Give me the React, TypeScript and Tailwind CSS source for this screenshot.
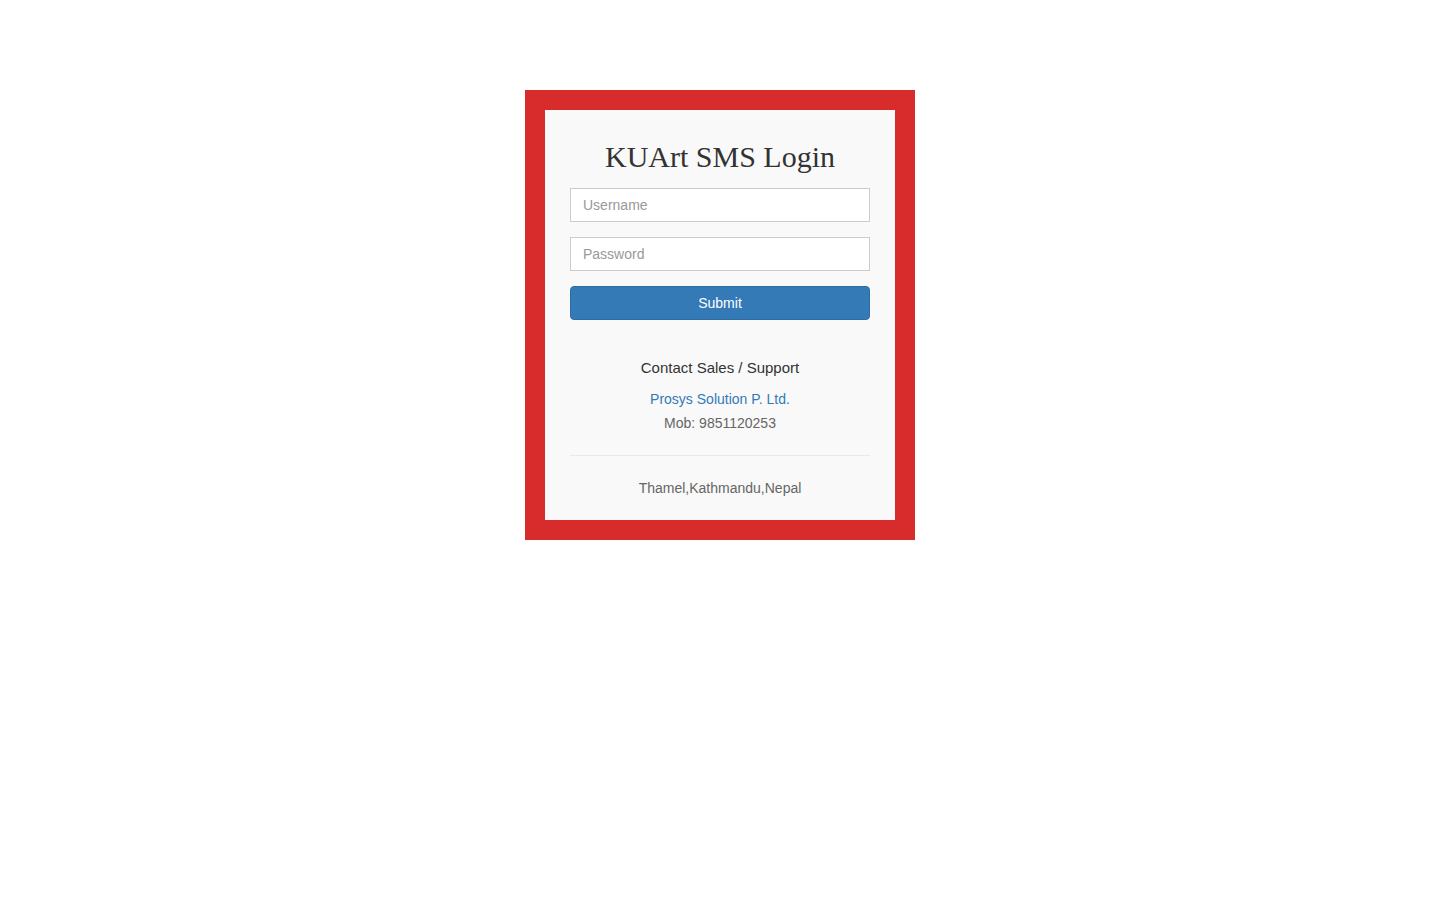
import React from 'react';

const App = () => {
  return (
    <div className="min-h-screen w-full bg-white font-['Liberation_Sans',Arial,sans-serif] text-[14px] text-[#333]">
      <div className="pt-[90px]">
        {/* Red frame */}
        <div className="mx-auto w-[390px] bg-[#d82b2b] p-[20px]">
          <div className="h-[410px] bg-[#f9f9f9] px-[25px] pt-[30px]">
            <h2 className="mb-[15px] text-center font-['Liberation_Serif','Times_New_Roman',serif] text-[30px] leading-[33px] text-[#333]">
              KUArt SMS Login
            </h2>

            <form className="flex flex-col" onSubmit={(e) => e.preventDefault()}>
              <input
                type="text"
                placeholder="Username"
                className="mb-[15px] h-[34px] w-full border border-[#ccc] bg-white px-3 text-[14px] text-[#555] outline-none placeholder:text-[#999]"
              />
              <input
                type="password"
                placeholder="Password"
                className="mb-[15px] h-[34px] w-full border border-[#ccc] bg-white px-3 text-[14px] text-[#555] outline-none placeholder:text-[#999]"
              />
              <button
                type="submit"
                className="h-[34px] w-full rounded-[4px] border border-[#2e6da4] bg-[#337ab7] text-[14px] text-white"
              >
                Submit
              </button>
            </form>

            <div className="mt-[37px] text-center">
              <p className="text-[15px] leading-[21px] text-[#333]">Contact Sales / Support</p>
              <p className="mt-[11px] leading-[20px] text-[#337ab7]">Prosys Solution P. Ltd.</p>
              <p className="mt-[4px] leading-[20px] text-[#666]">Mob: 9851120253</p>
            </div>

            <hr className="mt-[22px] border-0 border-t border-[#e9e9e9]" />

            <p className="mt-[22px] text-center leading-[20px] text-[#666]">Thamel,Kathmandu,Nepal</p>
          </div>
        </div>
      </div>
    </div>
  );
};

export default App;
